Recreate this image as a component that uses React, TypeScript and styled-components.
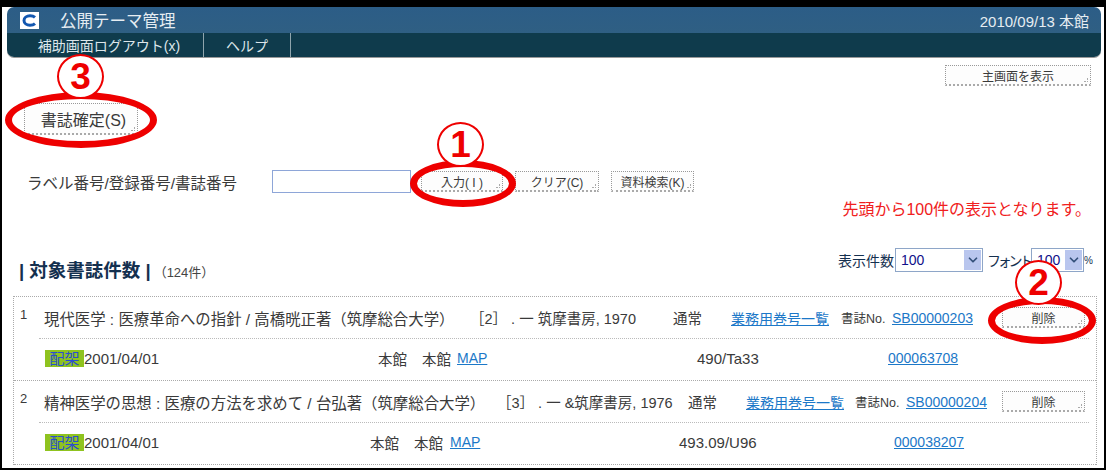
import React from 'react';
import styled, { createGlobalStyle } from 'styled-components';
import { ChevronDown } from 'lucide-react';

const GlobalStyle = createGlobalStyle`
  html, body {
    margin: 0;
    padding: 0;
    background: #fff;
  }
`;

const Frame = styled.div`
  position: relative;
  box-sizing: border-box;
  width: 1106px;
  height: 470px;
  overflow: hidden;
  background: #fff;
  border-style: solid;
  border-color: #000;
  border-width: 7px 2px 2px 2px;
  font-family: "Liberation Sans", "Noto Sans CJK JP", sans-serif;
  font-size: 13px;
  color: #3a3a3a;
`;

const Header = styled.header`
  margin: 0 3px 0 5px;
  height: 50px;
  border-radius: 7px;
  overflow: hidden;
  box-shadow: 0 1px 0 #999;
`;

const TitleBar = styled.div`
  height: 26px;
  display: flex;
  align-items: center;
  padding: 0 12px 0 13px;
  background: linear-gradient(#2c5d87, #2f5f83);
  color: #e6edf2;
`;

const Logo = styled.div`
  width: 19px;
  height: 17px;
  display: flex;
  align-items: center;
  justify-content: center;
  background: #fff;
  margin-right: 21px;
`;

const AppTitle = styled.span`
  font-size: 16.5px;
`;

const DateText = styled.span`
  margin-left: auto;
  font-size: 15px;
`;

const MenuBar = styled.nav`
  height: 24px;
  display: flex;
  background: #0f3b4c;
  color: #dde6ea;
  font-size: 14px;
`;

const MenuItem = styled.span<{ $w: number }>`
  box-sizing: border-box;
  width: ${p => p.$w}px;
  display: flex;
  align-items: center;
  justify-content: center;
  border-right: 1px solid #8fa5ad;
  &:first-child {
    padding-left: 8px;
  }
`;

const TopRow = styled.div`
  display: flex;
  justify-content: flex-end;
  padding: 8px 13px 0 0;
`;

const Button = styled.button<{ $w: number; $h?: number }>`
  position: relative;
  box-sizing: border-box;
  width: ${p => p.$w}px;
  height: ${p => p.$h ?? 21}px;
  padding: 0;
  font-family: inherit;
  font-size: 12px;
  color: #3a3a3a;
  background: #fdfdfd;
  border: 1px dotted #999;
  border-bottom: 2px dotted #aaa;
  &::after {
    content: '';
    position: absolute;
    right: 2px;
    bottom: 2px;
    width: 3px;
    height: 3px;
    border-right: 1px dotted #aaa;
    border-bottom: 1px dotted #aaa;
  }
`;

const ConfirmRow = styled.div`
  padding: 17px 0 0 22px;
`;

const LargeButton = styled(Button)`
  padding-left: 5px;
  font-size: 16px;
`;

const SearchRow = styled.div`
  display: flex;
  align-items: center;
  margin-top: 35px;
  padding-left: 25px;
`;

const SearchLabel = styled.label`
  width: 245px;
  font-size: 15.5px;
`;

const SearchInput = styled.input`
  box-sizing: border-box;
  width: 139px;
  height: 23px;
  border: 1px solid #8ea6d8;
  background: #fff;
  margin-right: 10px;
  padding: 0;
`;

const SearchButtons = styled.div`
  display: flex;
  gap: 12px;
`;

const Notice = styled.div`
  margin-top: 6px;
  padding-right: 13px;
  text-align: right;
  color: #f02020;
  font-size: 16px;
  line-height: 22px;
`;

const SummaryRow = styled.div`
  display: flex;
  align-items: flex-end;
  height: 35px;
  margin-top: 27px;
  padding: 0 13px 0 17px;
`;

const SectionTitle = styled.h2`
  margin: 0;
  font-size: 18.5px;
  font-weight: 700;
  color: #14304f;
  line-height: 20px;
`;

const Count = styled.span`
  margin-left: 3px;
  font-size: 13px;
  font-weight: 400;
  color: #444;
`;

const Controls = styled.div`
  margin-left: auto;
  display: flex;
  align-items: center;
  align-self: flex-start;
  font-size: 14px;
  color: #14304f;
`;

const SelectBox = styled.div<{ $w: number }>`
  box-sizing: border-box;
  width: ${p => p.$w}px;
  height: 24px;
  margin-left: 1px;
  display: flex;
  align-items: center;
  justify-content: space-between;
  padding: 0 1px 0 5px;
  border: 1px solid #8ea6c8;
  background: #fff;
  color: #10108a;
  font-size: 14px;
`;

const SelectArrow = styled.span`
  width: 17px;
  height: 20px;
  display: flex;
  align-items: center;
  justify-content: center;
  background: #b9c6ee;
  color: #33507a;
`;

const FontLabel = styled.span`
  width: 43px;
  margin-left: 4px;
  white-space: nowrap;
  letter-spacing: -3.2px;
`;

const Percent = styled.span`
  width: 7px;
  font-size: 10px;
`;

const List = styled.div`
  margin: 13px 7px 0 11px;
  border: 1px dotted #aaa;
  border-bottom: none;
`;

const Entry = styled.article`
  position: relative;
  box-sizing: border-box;
  height: 84px;
  padding: 0 7px 0 25px;
  border-bottom: 1px dotted #aaa;
`;

const EntryNumber = styled.span`
  position: absolute;
  left: 6px;
  top: 10px;
  font-size: 13px;
`;

const MainLine = styled.div`
  display: flex;
  align-items: center;
  height: 41px;
  padding-left: 5px;
  border-bottom: 1px dotted #bbb;
  white-space: nowrap;
  font-size: 14.5px;
`;

const SubLine = styled.div`
  display: flex;
  align-items: center;
  height: 38px;
  padding-left: 6px;
  white-space: nowrap;
  font-size: 14.5px;
`;

const Cell = styled.span<{ $w: number }>`
  flex: none;
  width: ${p => p.$w}px;
`;

const TitleCell = styled(Cell)`
  font-size: 15.4px;
`;

const LabelCell = styled(Cell)`
  font-size: 12.5px;
`;

const CallCell = styled(Cell)`
  font-size: 15px;
`;

const Link = styled.a`
  color: #1c78c8;
  text-decoration: underline;
  font-size: 14px;
`;

const DateCell = styled(Cell)`
  display: flex;
  align-items: center;
  font-size: 15px;
`;

const Status = styled.span`
  width: 39px;
  height: 17px;
  line-height: 17px;
  background: #8fc31f;
  color: #2a4fd0;
  text-align: center;
`;

const Mark = styled.div<{ $x: number; $y: number; $w: number; $h: number }>`
  position: absolute;
  box-sizing: border-box;
  left: ${p => p.$x - 2}px;
  top: ${p => p.$y - 7}px;
  width: ${p => p.$w}px;
  height: ${p => p.$h}px;
  border: 7px solid #ee0000;
  border-radius: 50%;
  pointer-events: none;
`;

const Badge = styled.div<{ $x: number; $y: number }>`
  position: absolute;
  box-sizing: border-box;
  left: ${p => p.$x - 2}px;
  top: ${p => p.$y - 7}px;
  width: 47px;
  height: 45px;
  display: flex;
  align-items: center;
  justify-content: center;
  background: #fff;
  border: 2px solid #ee0000;
  border-radius: 50%;
  color: #ee0000;
  font-size: 37px;
  font-weight: 700;
  line-height: 1;
`;

const entries = [
  {
    no: 1,
    title: '現代医学 : 医療革命への指針 / 高橋晄正著（筑摩総合大学）',
    titleW: 426,
    edition: '［2］ . 一 筑摩書房, 1970',
    editionW: 203,
    kindW: 58,
    listW: 110,
    labelW: 51,
    bib: 'SB00000203',
    bibW: 110,
    dateW: 333,
    libW: 44,
    lib2W: 35,
    mapW: 240,
    call: '490/Ta33',
    callW: 191,
    item: '000063708',
  },
  {
    no: 2,
    title: '精神医学の思想 : 医療の方法を求めて / 台弘著（筑摩総合大学）',
    titleW: 453,
    edition: '［3］ . 一 &筑摩書房, 1976',
    editionW: 191,
    kindW: 58,
    listW: 109,
    labelW: 51,
    bib: 'SB00000204',
    bibW: 96,
    dateW: 325,
    libW: 44,
    lib2W: 36,
    mapW: 229,
    call: '493.09/U96',
    callW: 215,
    item: '000038207',
  },
];

export default function App() {
  return (
    <Frame>
      <GlobalStyle />
      <Header>
        <TitleBar>
          <Logo>
            <svg width="15" height="13" viewBox="0 0 15 13">
              <path d="M13 3.4C11.8 2.3 10 1.8 8 1.8 4.6 1.8 2 3.8 2 6.5s2.6 4.7 6 4.7c2 0 3.8-.5 5-1.6" fill="none" stroke="#1257b0" strokeWidth="3" />
            </svg>
          </Logo>
          <AppTitle>公開テーマ管理</AppTitle>
          <DateText>2010/09/13 本館</DateText>
        </TitleBar>
        <MenuBar>
          <MenuItem $w={197}>補助画面ログアウト(x)</MenuItem>
          <MenuItem $w={87}>ヘルプ</MenuItem>
        </MenuBar>
      </Header>

      <TopRow>
        <Button $w={146}>主画面を表示</Button>
      </TopRow>

      <ConfirmRow>
        <LargeButton $w={114} $h={32}>書誌確定(S)</LargeButton>
      </ConfirmRow>

      <SearchRow>
        <SearchLabel>ラベル番号/登録番号/書誌番号</SearchLabel>
        <SearchInput />
        <SearchButtons>
          <Button $w={82}>入力( I )</Button>
          <Button $w={84}>クリア(C)</Button>
          <Button $w={83}>資料検索(K)</Button>
        </SearchButtons>
      </SearchRow>

      <Notice>先頭から100件の表示となります。</Notice>

      <SummaryRow>
        <SectionTitle>
          | 対象書誌件数 |<Count>（124件）</Count>
        </SectionTitle>
        <Controls>
          表示件数
          <SelectBox $w={88}>
            100
            <SelectArrow><ChevronDown size={14} strokeWidth={3} /></SelectArrow>
          </SelectBox>
          <FontLabel>フォント</FontLabel>
          <SelectBox $w={53}>
            100
            <SelectArrow><ChevronDown size={14} strokeWidth={3} /></SelectArrow>
          </SelectBox>
          <Percent>%</Percent>
        </Controls>
      </SummaryRow>

      <List>
        {entries.map(e => (
          <Entry key={e.no}>
            <EntryNumber>{e.no}</EntryNumber>
            <MainLine>
              <TitleCell $w={e.titleW}>{e.title}</TitleCell>
              <Cell $w={e.editionW}>{e.edition}</Cell>
              <Cell $w={e.kindW}>通常</Cell>
              <Cell $w={e.listW}><Link>業務用巻号一覧</Link></Cell>
              <LabelCell $w={e.labelW}>書誌No.</LabelCell>
              <Cell $w={e.bibW}><Link>{e.bib}</Link></Cell>
              <Button $w={83}>削除</Button>
            </MainLine>
            <SubLine>
              <DateCell $w={e.dateW}><Status>配架</Status>2001/04/01</DateCell>
              <Cell $w={e.libW}>本館</Cell>
              <Cell $w={e.lib2W}>本館</Cell>
              <Cell $w={e.mapW}><Link>MAP</Link></Cell>
              <CallCell $w={e.callW}>{e.call}</CallCell>
              <Link>{e.item}</Link>
            </SubLine>
          </Entry>
        ))}
      </List>

      <Mark $x={5} $y={92} $w={152} $h={56} />
      <Mark $x={410} $y={160} $w={106} $h={47} />
      <Mark $x={988} $y={297} $w={108} $h={47} />
      <Badge $x={57} $y={54}>3</Badge>
      <Badge $x={437} $y={122}>1</Badge>
      <Badge $x={1015} $y={260}>2</Badge>
    </Frame>
  );
}
